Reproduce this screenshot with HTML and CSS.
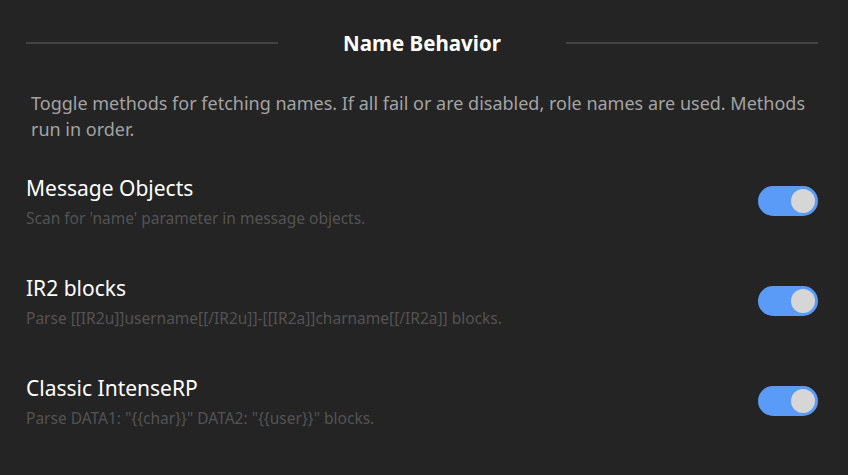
FILE: index.html
```html
<!DOCTYPE html>
<html lang="en">
<head>
    <meta charset="UTF-8">
    <meta name="viewport" content="width=device-width, initial-scale=1.0">
    <title>Name Behavior</title>
    <link rel="stylesheet" href="styles.css">
</head>
<body>
    <div class="settings-panel">
        <!-- Section header -->
        <div class="section-header">
            <span class="header-line"></span>
            <h2>Name Behavior</h2>
            <span class="header-line"></span>
        </div>

        <p class="section-desc">Toggle methods for fetching names. If all fail or are disabled, role names are used. Methods run in order.</p>

        <!-- Message Objects -->
        <div class="setting-row">
            <div class="setting-text">
                <div class="setting-title">Message Objects</div>
                <div class="setting-hint">Scan for 'name' parameter in message objects.</div>
            </div>
            <label class="switch">
                <input type="checkbox" checked>
                <span class="slider"></span>
            </label>
        </div>

        <!-- IR2 blocks -->
        <div class="setting-row">
            <div class="setting-text">
                <div class="setting-title">IR2 blocks</div>
                <div class="setting-hint">Parse [[IR2u]]username[[/IR2u]]-[[IR2a]]charname[[/IR2a]] blocks.</div>
            </div>
            <label class="switch">
                <input type="checkbox" checked>
                <span class="slider"></span>
            </label>
        </div>

        <!-- Classic IntenseRP -->
        <div class="setting-row">
            <div class="setting-text">
                <div class="setting-title">Classic IntenseRP</div>
                <div class="setting-hint">Parse DATA1: "{{char}}" DATA2: "{{user}}" blocks.</div>
            </div>
            <label class="switch">
                <input type="checkbox" checked>
                <span class="slider"></span>
            </label>
        </div>
    </div>
</body>
</html>
```

FILE: styles.css
```css
body {
    margin: 0;
    padding: 0;
    background-color: #242424;
    font-family: 'Noto Sans', 'Open Sans', sans-serif;
    color: #ffffff;
}
.settings-panel {
    padding: 24px 30px 0 26px;
}
.section-header {
    display: flex;
    align-items: center;
    gap: 20px;
    height: 38px;
}
.header-line {
    flex: 1;
    height: 2px;
    background-color: #434343;
}
.section-header h2 {
    margin: 0;
    width: 248px;
    text-align: center;
    font-size: 20.5px;
    font-weight: 700;
    color: #ffffff;
}
.section-desc {
    margin: 28px 0 32px 5px;
    font-size: 18px;
    line-height: 26px;
    color: #a3a3a3;
}
.setting-row {
    display: flex;
    align-items: flex-start;
    justify-content: space-between;
    height: 100px;
}
.setting-title {
    font-size: 21px;
    line-height: 28px;
    color: #ffffff;
}
.setting-hint {
    margin-top: 6px;
    font-size: 15.5px;
    line-height: 21px;
    color: #535353;
}
.switch {
    position: relative;
    display: inline-block;
    width: 60px;
    height: 30px;
    margin-top: 12px;
}
.switch input {
    opacity: 0;
    width: 0;
    height: 0;
}
.slider {
    position: absolute;
    inset: 0;
    border-radius: 15px;
    background-color: #5b9bf8;
}
.slider::before {
    content: "";
    position: absolute;
    width: 24px;
    height: 24px;
    right: 3px;
    top: 3px;
    border-radius: 50%;
    background-color: #d6d6d6;
}
```
